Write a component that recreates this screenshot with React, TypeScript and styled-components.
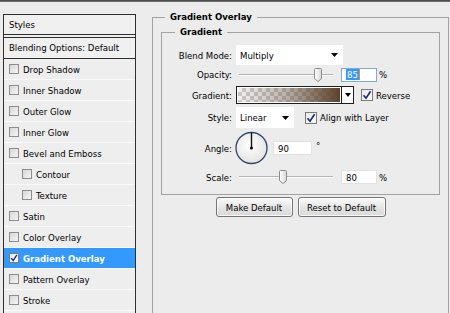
import React from 'react';
import styled, { createGlobalStyle } from 'styled-components';

const GlobalStyle = createGlobalStyle`
  html, body { margin: 0; padding: 0; }
  body {
    background: #ececec;
    font-family: "DejaVu Sans Condensed", "DejaVu Sans", sans-serif;
    font-size: 9.5px;
    color: #000;
  }
  * { box-sizing: border-box; }
`;

const Window = styled.div`
  width: 450px;
  height: 313px;
  overflow: hidden;
  background: #ececec;
`;

const TopBar = styled.div`
  height: 2px;
  background: linear-gradient(#3e3e3e, #7a7a7a);
`;

const Body = styled.div`
  display: flex;
  align-items: flex-start;
  padding-left: 3px;
`;

/* ---------- left styles list ---------- */

const StylesPanel = styled.div`
  width: 133px;
  height: 320px;
  margin-top: 12px;
  border: 1px solid #2e2e2e;
  border-bottom: none;
  background: #eeeeee;
`;

const PanelHeader = styled.div`
  height: 20px;
  line-height: 20px;
  padding-left: 5px;
  border-bottom: 1px solid #2e2e2e;
  background: #f0f0f0;
`;

const PanelSpacer = styled.div`
  height: 2px;
`;

const BlendingRow = styled.div`
  height: 22px;
  line-height: 20px;
  padding-left: 5px;
  border-top: 1px solid #2e2e2e;
  border-bottom: 1px solid #2e2e2e;
  background: #f0f0f0;
`;

const StyleRow = styled.div<{ $indent?: boolean; $selected?: boolean }>`
  height: 21px;
  display: flex;
  align-items: center;
  gap: 4px;
  padding-left: ${(p) => (p.$indent ? 18 : 5)}px;
  border-bottom: 1px solid #f9f9f9;
  background: ${(p) => (p.$selected ? '#3399ff' : 'transparent')};
  color: ${(p) => (p.$selected ? '#fff' : '#000')};
  font-weight: ${(p) => (p.$selected ? 'bold' : 'normal')};
`;

const CheckBoxBox = styled.span<{ $size: number }>`
  display: inline-flex;
  align-items: center;
  justify-content: center;
  flex: none;
  width: ${(p) => p.$size}px;
  height: ${(p) => p.$size}px;
  border: 1px solid #8d8d8d;
  background: linear-gradient(135deg, #d6d6d6, #f6f6f6);
`;

const CheckedBox = styled(CheckBoxBox)`
  border-color: #7b7b7b;
  background: linear-gradient(135deg, #e9e9e9, #ffffff);
`;

function CheckBox({ checked, size = 10 }: { checked?: boolean; size?: number }) {
  if (!checked) return <CheckBoxBox $size={size} />;
  return (
    <CheckedBox $size={size}>
      <svg width={size - 2} height={size - 2} viewBox="0 0 10 10">
        <path d="M1.5 5.2 L4 8.2 L8.6 1.2" fill="none" stroke="#1f2d78" strokeWidth="1.7" />
      </svg>
    </CheckedBox>
  );
}

/* ---------- right settings ---------- */

const OuterFieldset = styled.fieldset`
  margin: 9px 0 0 16px;
  padding: 3px 8px 0 8px;
  width: 297px;
  height: 330px;
  min-width: 0;
  border: 1px solid #a2a2a2;
`;

const Legend = styled.legend<{ $offset: number }>`
  margin-left: ${(p) => p.$offset}px;
  padding: 0 5px;
  line-height: 12px;
  font-weight: bold;
  font-size: 9.5px;
`;

const InnerFieldset = styled.fieldset`
  margin: 0;
  padding: 7px 0 7px 0;
  min-width: 0;
  border: 1px solid #a2a2a2;
`;

const FormRow = styled.div<{ $h: number }>`
  height: ${(p) => p.$h}px;
  display: flex;
  align-items: center;
`;

const Label = styled.span`
  width: 70px;
  margin-right: 4px;
  text-align: right;
  flex: none;
`;

const SelectBox = styled.div<{ $w: number; $h: number }>`
  width: ${(p) => p.$w}px;
  height: ${(p) => p.$h}px;
  background: #fff;
  display: flex;
  align-items: center;
  justify-content: space-between;
  padding: 0 5px 0 4px;
  flex: none;
`;

function Select({ value, w, h }: { value: string; w: number; h: number }) {
  return (
    <SelectBox $w={w} $h={h}>
      <span>{value}</span>
      <svg width="7" height="4" viewBox="0 0 7 4">
        <polygon points="0,0 7,0 3.5,4" fill="#000" />
      </svg>
    </SelectBox>
  );
}

const SliderWrap = styled.div`
  position: relative;
  width: 97px;
  height: 14px;
  margin-left: 3px;
  flex: none;
`;

const SliderTrack = styled.div`
  position: absolute;
  left: 0;
  right: 3px;
  top: 6px;
  height: 2px;
  border-top: 1px solid #b4b4b4;
  border-bottom: 1px solid #ffffff;
`;

const SliderThumb = styled.svg`
  position: absolute;
  top: 0;
  margin-left: -4px;
`;

function Slider({ ratio }: { ratio: number }) {
  return (
    <SliderWrap>
      <SliderTrack />
      <SliderThumb width="8" height="14" viewBox="0 0 8 14" style={{ left: `${ratio * 94}px` }}>
        <defs>
          <linearGradient id="thumbg" x1="0" x2="1" y1="0" y2="0">
            <stop offset="0" stopColor="#ffffff" />
            <stop offset="1" stopColor="#d8d8d8" />
          </linearGradient>
        </defs>
        <path d="M1.5 0.5 H6.5 Q7.5 0.5 7.5 1.5 V10.5 L4 13.5 L0.5 10.5 V1.5 Q0.5 0.5 1.5 0.5 Z" fill="url(#thumbg)" stroke="#8a8a8a" strokeWidth="1" />
      </SliderThumb>
    </SliderWrap>
  );
}

const TextField = styled.div<{ $w: number; $focus?: boolean }>`
  width: ${(p) => p.$w}px;
  height: 14px;
  margin-left: ${(p) => (p.$focus ? 5 : 5)}px;
  background: #fff;
  border: 1px solid ${(p) => (p.$focus ? '#7fa9d8' : '#e2e2e2')};
  display: flex;
  align-items: center;
  padding-left: 4px;
  flex: none;
`;

const Selected = styled.span`
  background: #3399ff;
  color: #fff;
  padding: 0 1px;
  line-height: 11px;
  border-right: 1px solid #e38a2c;
`;

const Unit = styled.span<{ $raise?: boolean }>`
  margin-left: ${(p) => (p.$raise ? 4 : 2)}px;
  ${(p) => (p.$raise ? 'align-self: flex-start; margin-top: 11px;' : '')}
`;

const GradientBox = styled.div`
  width: 118px;
  height: 18px;
  display: flex;
  border: 1px solid #1e1e1e;
  flex: none;
`;

const GradientSwatch = styled.div`
  flex: 1;
  border: 1px solid #fff;
  background:
    linear-gradient(to right, rgba(92, 66, 44, 0) 0%, rgba(92, 66, 44, 0.35) 45%, rgba(92, 66, 44, 1) 100%),
    repeating-conic-gradient(#c9c9c9 0 25%, #f2f2f2 0 50%) 0 0 / 8px 8px;
`;

const GradientArrow = styled.div`
  width: 12px;
  border-left: 1px solid #1e1e1e;
  background: #fff;
  display: flex;
  align-items: center;
  justify-content: center;
`;

const InlineCheck = styled.label<{ $gap: number }>`
  display: flex;
  align-items: center;
  gap: 3px;
  margin-left: ${(p) => p.$gap}px;
`;

const Dial = styled.svg`
  flex: none;
  margin-left: -1px;
`;

const ButtonRow = styled.div`
  display: flex;
  justify-content: center;
  gap: 5px;
  margin-top: 2px;
`;

const Button = styled.button<{ $w: number }>`
  width: ${(p) => p.$w}px;
  height: 20px;
  padding: 0;
  font: inherit;
  color: #000;
  border: 1px solid #747474;
  border-radius: 3px;
  background: linear-gradient(#fbfbfb, #e6e6e6 50%, #d9d9d9);
  box-shadow: inset 0 0 0 1px rgba(255, 255, 255, 0.8);
`;

const styleItems: { name: string; indent?: boolean; selected?: boolean }[] = [
  { name: 'Drop Shadow' },
  { name: 'Inner Shadow' },
  { name: 'Outer Glow' },
  { name: 'Inner Glow' },
  { name: 'Bevel and Emboss' },
  { name: 'Contour', indent: true },
  { name: 'Texture', indent: true },
  { name: 'Satin' },
  { name: 'Color Overlay' },
  { name: 'Gradient Overlay', selected: true },
  { name: 'Pattern Overlay' },
  { name: 'Stroke' },
];

export default function App() {
  return (
    <Window>
      <GlobalStyle />
      <TopBar />
      <Body>
        <StylesPanel>
          <PanelHeader>Styles</PanelHeader>
          <PanelSpacer />
          <BlendingRow>Blending Options: Default</BlendingRow>
          {styleItems.map((it) => (
            <StyleRow key={it.name} $indent={it.indent} $selected={it.selected}>
              <CheckBox checked={it.selected} />
              <span>{it.name}</span>
            </StyleRow>
          ))}
        </StylesPanel>

        <OuterFieldset>
          <Legend $offset={4}>Gradient Overlay</Legend>
          <InnerFieldset>
            <Legend $offset={13}>Gradient</Legend>
            <FormRow $h={20}>
              <Label>Blend Mode:</Label>
              <Select value="Multiply" w={107} h={20} />
            </FormRow>
            <FormRow $h={19}>
              <Label>Opacity:</Label>
              <Slider ratio={0.84} />
              <TextField $w={36} $focus>
                <Selected>85</Selected>
              </TextField>
              <Unit>%</Unit>
            </FormRow>
            <FormRow $h={22}>
              <Label>Gradient:</Label>
              <GradientBox>
                <GradientSwatch />
                <GradientArrow>
                  <svg width="6" height="4" viewBox="0 0 6 4">
                    <polygon points="0,0 6,0 3,4" fill="#000" />
                  </svg>
                </GradientArrow>
              </GradientBox>
              <InlineCheck $gap={7}>
                <CheckBox checked size={12} />
                <span>Reverse</span>
              </InlineCheck>
            </FormRow>
            <FormRow $h={23}>
              <Label>Style:</Label>
              <Select value="Linear" w={58} h={21} />
              <InlineCheck $gap={11}>
                <CheckBox checked size={12} />
                <span>Align with Layer</span>
              </InlineCheck>
            </FormRow>
            <FormRow $h={38}>
              <Label>Angle:</Label>
              <Dial width="33" height="34" viewBox="0 0 33 34">
                <defs>
                  <radialGradient id="dialg" cx="0.45" cy="0.4" r="0.6">
                    <stop offset="0" stopColor="#ffffff" />
                    <stop offset="1" stopColor="#e4e4e4" />
                  </radialGradient>
                </defs>
                <circle cx="16.5" cy="17" r="15.5" fill="url(#dialg)" stroke="#33436a" strokeWidth="1.3" />
                <line x1="16.5" y1="17" x2="16.5" y2="1.5" stroke="#111" strokeWidth="1.4" />
                <circle cx="16.5" cy="17" r="1.6" fill="#111" />
              </Dial>
              <TextField $w={39}>90</TextField>
              <Unit $raise>°</Unit>
            </FormRow>
            <FormRow $h={20}>
              <Label>Scale:</Label>
              <Slider ratio={0.47} />
              <TextField $w={36}>80</TextField>
              <Unit>%</Unit>
            </FormRow>
          </InnerFieldset>
          <ButtonRow>
            <Button $w={77}>Make Default</Button>
            <Button $w={88}>Reset to Default</Button>
          </ButtonRow>
        </OuterFieldset>
      </Body>
    </Window>
  );
}
